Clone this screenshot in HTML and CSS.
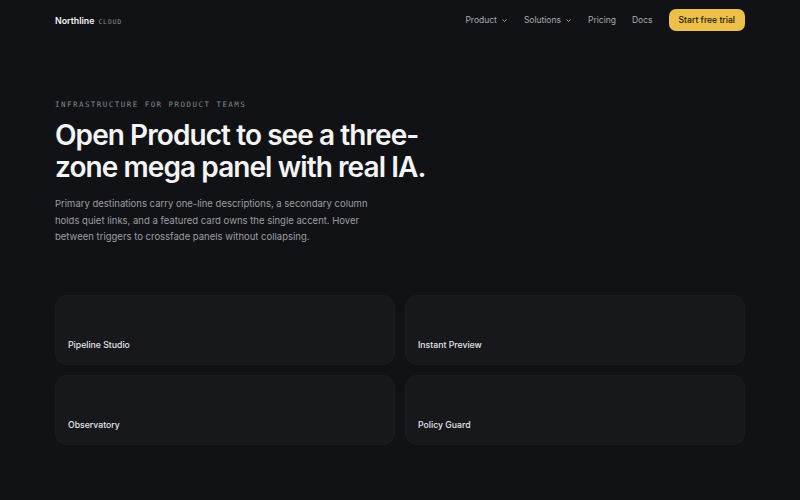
FILE: index.html
```html
<!DOCTYPE html>
<html lang="en">
<head>
  <meta charset="UTF-8">
  <meta name="viewport" content="width=device-width, initial-scale=1.0">
  <title>Northline Cloud</title>
  <link rel="stylesheet" href="styles.css">
</head>
<body>
  <div class="wrap">
    <header class="top">
      <a href="#" class="brand">Northline <span class="brand-tag">CLOUD</span></a>
      <nav class="nav">
        <a href="#" class="nav-link">Product
          <svg class="chev" viewBox="0 0 10 10"><path d="M2.5 4l2.5 2.5L7.5 4"/></svg>
        </a>
        <a href="#" class="nav-link">Solutions
          <svg class="chev" viewBox="0 0 10 10"><path d="M2.5 4l2.5 2.5L7.5 4"/></svg>
        </a>
        <a href="#" class="nav-link">Pricing</a>
        <a href="#" class="nav-link">Docs</a>
        <a href="#" class="btn">Start free trial</a>
      </nav>
    </header>

    <section class="hero">
      <p class="eyebrow">INFRASTRUCTURE FOR PRODUCT TEAMS</p>
      <h1>Open Product to see a three-zone mega panel with real IA.</h1>
      <p class="lead">Primary destinations carry one-line descriptions, a secondary column holds quiet links, and a featured card owns the single accent. Hover between triggers to crossfade panels without collapsing.</p>
    </section>

    <section class="grid">
      <div class="card"><span>Pipeline Studio</span></div>
      <div class="card"><span>Instant Preview</span></div>
      <div class="card"><span>Observatory</span></div>
      <div class="card"><span>Policy Guard</span></div>
    </section>
  </div>
</body>
</html>
```

FILE: styles.css
```css
* { box-sizing: border-box; }
html, body { margin: 0; padding: 0; }
body { background: #111215; color: #ececee; font-family: Inter, "Noto Sans", sans-serif; }
a { text-decoration: none; color: inherit; }

.wrap { width: 690px; margin: 0 auto; }

/* header */
.top { display: flex; align-items: center; justify-content: space-between; height: 40px; }
.brand { font-size: 8.8px; font-weight: 600; color: #f2f2f3; display: flex; align-items: baseline; gap: 4px; }
.brand-tag { font-family: "DejaVu Sans Mono", monospace; font-size: 6.5px; font-weight: 400; color: #8d8e93;
             letter-spacing: 0.12em; }
.nav { display: flex; align-items: center; gap: 16px; }
.nav-link { font-size: 8.5px; color: #a9aaaf; display: flex; align-items: center; gap: 4px; }
.chev { width: 7px; height: 7px; fill: none; stroke: #a9aaaf; stroke-width: 1.3; stroke-linecap: round; stroke-linejoin: round; }
.btn { background: #ecc04a; color: #1a1608; font-size: 8.6px; font-weight: 500; padding: 0 10px; height: 22px;
       line-height: 22px; border-radius: 7px; }

/* hero */
.hero { padding-top: 60px; }
.eyebrow { margin: 0; font-family: "DejaVu Sans Mono", monospace; font-size: 7.5px; line-height: 10px;
           letter-spacing: 0.195em; color: #86878c; }
h1 { margin: 9px 0 0; width: 380px; font-size: 28px; line-height: 32px; font-weight: 600;
     letter-spacing: -0.033em; color: #f4f4f5; }
.lead { margin: 13px 0 0; width: 320px; font-size: 9.5px; line-height: 16.5px; color: #9d9ea3; }

/* cards */
.grid { margin-top: 49px; display: grid; grid-template-columns: 1fr 1fr; gap: 10px; }
.card { height: 70px; background: #17181c; border: 1px solid #1c1d21; border-radius: 12px; display: flex;
        align-items: flex-end; padding: 0 12px 14px; }
.card span { font-size: 8.7px; font-weight: 500; color: #e6e6e8; }
```
